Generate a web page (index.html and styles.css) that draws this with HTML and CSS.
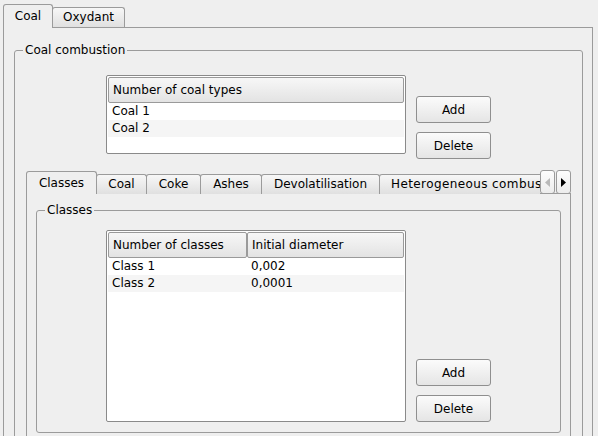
FILE: index.html
```html
<!DOCTYPE html>
<html>
<head>
<meta charset="utf-8">
<link rel="stylesheet" href="styles.css">
</head>
<body>
<div class="window">
  <div class="tabbar">
    <div class="tab selected tab-coal-outer">Coal</div>
    <div class="tab tab-oxydant">Oxydant</div>
  </div>
  <div class="pane outer-pane">
    <div class="group combustion">
      <div class="group-title">Coal combustion</div>
      <div class="row top-row">
        <div class="table coal-table">
          <div class="thead"><div class="th th-full">Number of coal types</div></div>
          <div class="tr"><div class="td">Coal 1</div></div>
          <div class="tr alt"><div class="td">Coal 2</div></div>
        </div>
        <div class="buttons top-buttons">
          <button class="btn">Add</button>
          <button class="btn">Delete</button>
        </div>
      </div>
      <div class="inner-tabs">
        <div class="tabbar">
          <div class="tabs-viewport">
            <div class="tab selected tab-classes">Classes</div>
            <div class="tab tab-coal">Coal</div>
            <div class="tab tab-coke">Coke</div>
            <div class="tab tab-ashes">Ashes</div>
            <div class="tab tab-devol">Devolatilisation</div>
            <div class="tab tab-hetero">Heterogeneous combustion</div>
          </div>
          <div class="scroller">
            <div class="scroll-btn"><svg width="5" height="9" viewBox="0 0 5 9"><path d="M5 0 L0 4.5 L5 9z" fill="#b9b9b9"/></svg></div>
            <div class="scroll-btn"><svg width="5" height="9" viewBox="0 0 5 9"><path d="M0 0 L5 4.5 L0 9z" fill="#000"/></svg></div>
          </div>
        </div>
        <div class="pane inner-pane">
          <div class="group classes">
            <div class="group-title">Classes</div>
            <div class="row classes-row">
              <div class="table classes-table">
                <div class="thead">
                  <div class="th th-first">Number of classes</div>
                  <div class="th th-rest">Initial diameter</div>
                </div>
                <div class="tr"><div class="td td-first">Class 1</div><div class="td">0,002</div></div>
                <div class="tr alt"><div class="td td-first">Class 2</div><div class="td">0,0001</div></div>
              </div>
              <div class="buttons bottom-buttons">
                <button class="btn">Add</button>
                <button class="btn">Delete</button>
              </div>
            </div>
          </div>
        </div>
      </div>
    </div>
  </div>
</div>
</body>
</html>
```
FILE: styles.css
```css
* { box-sizing: border-box; }
html, body { margin: 0; padding: 0; }
body {
  background: #efefef;
  font-family: "DejaVu Sans", sans-serif;
  font-size: 12px;
  color: #000;
  width: 598px;
  height: 436px;
  overflow: hidden;
}
.window {
  padding: 4px 5px 0 3px;
  height: 436px;
  overflow: hidden;
}

/* tabs */
.tabbar {
  display: flex;
  align-items: flex-end;
  height: 23px;
}
.tab {
  height: 20px;
  line-height: 18px;
  border: 1px solid #9b9b9b;
  border-bottom: none;
  border-radius: 3px 3px 0 0;
  background: linear-gradient(#f7f7f7, #e0e0e0);
  padding: 0;
  text-align: center;
  white-space: nowrap;
  flex: none;
  overflow: hidden;
}
.tab + .tab { margin-left: -1px; }
.tab.selected {
  height: 24px;
  line-height: 22px;
  margin-bottom: -1px;
  background: #efefef;
  position: relative;
  z-index: 1;
}
.tab-coal-outer { width: 50px; }
.tab-oxydant { width: 73px; }
.tab-classes { width: 71px; }
.tab-coal { width: 51px; }
.tab-coke { width: 55px; }
.tab-ashes { width: 62px; }
.tab-devol { width: 119px; }
.tab-hetero { padding: 0 11px; text-align: left; letter-spacing: 0.4px; }

.pane {
  border: 1px solid #9b9b9b;
  background: #efefef;
}
.outer-pane {
  padding: 22px 9px 0 10px;
  height: 430px;
}

/* group boxes */
.group {
  position: relative;
  border: 1px solid #9b9b9b;
  border-radius: 3px;
}
.group-title {
  position: absolute;
  top: -8px;
  left: 8px;
  padding: 0 2px;
  background: #efefef;
  line-height: 15px;
  white-space: nowrap;
}
.combustion {
  padding: 24px 11px 0 11px;
  height: 420px;
}
.row { display: flex; gap: 10px; }
.top-row { padding-left: 80px; }

/* tables */
.table {
  width: 300px;
  border: 1px solid #8a8a8a;
  border-radius: 2px;
  background: #fff;
  padding: 1px;
}
.coal-table { height: 79px; }
.classes-table { height: 192px; }
.thead { display: flex; height: 26px; }
.th {
  border: 1px solid #9a9a9a;
  border-radius: 2px;
  background: linear-gradient(#f7f7f7, #e3e3e3);
  line-height: 24px;
  padding-left: 4px;
  white-space: nowrap;
}
.th-full { flex: 1; }
.th-first { width: 139px; }
.th-rest { flex: 1; }
.tr { display: flex; height: 17px; line-height: 16px; background: #fff; }
.tr.alt { background: #f5f5f5; }
.td { padding-left: 4px; white-space: nowrap; }
.td-first { width: 139px; }

/* buttons */
.buttons {
  display: flex;
  flex-direction: column;
  gap: 9px;
  width: 75px;
}
.top-buttons { margin-top: 21px; }
.bottom-buttons { align-self: flex-end; }
.btn {
  height: 27px;
  width: 75px;
  border: 1px solid #8f8f8f;
  border-radius: 3px;
  background: linear-gradient(#fbfbfb, #e5e5e5);
  font: inherit;
  color: #000;
  padding: 0;
}

/* inner tab widget */
.inner-tabs { margin-top: 11px; }
.tabs-viewport {
  flex: 1;
  display: flex;
  align-items: flex-end;
  height: 24px;
  margin-bottom: -1px;
  overflow: hidden;
  position: relative;
  z-index: 1;
}
.scroller {
  display: flex;
  gap: 1px;
  height: 24px;
  margin-bottom: -1px;
  position: relative;
  z-index: 2;
}
.scroll-btn {
  width: 15px;
  height: 24px;
  border: 1px solid #9b9b9b;
  border-radius: 3px;
  background: linear-gradient(#fdfdfd, #ececec);
  display: flex;
  align-items: center;
  justify-content: center;
}
.scroll-btn svg { display: block; }
.inner-pane {
  padding: 16px 9px 0 9px;
  height: 260px;
}
.classes { padding: 19px 10px 10px 69px; }
.classes-row { padding-left: 0; }
```
